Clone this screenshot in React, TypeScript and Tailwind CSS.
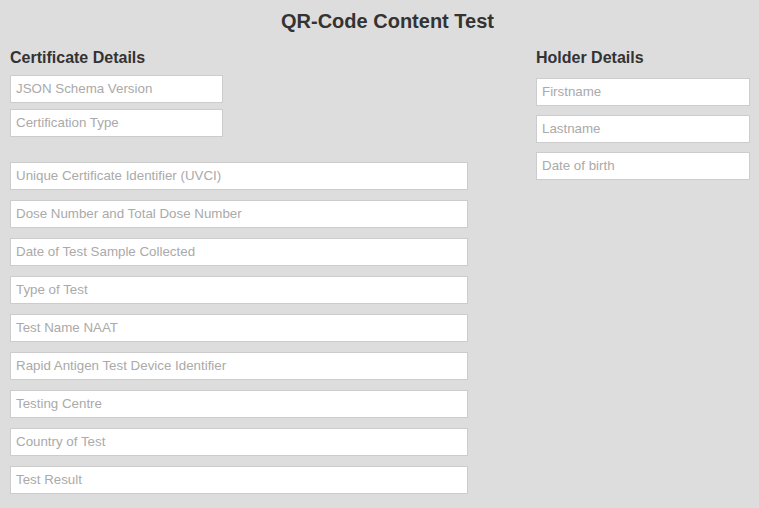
import React from "react";

const left1 = ["JSON Schema Version", "Certification Type"];
const left2 = [
  "Unique Certificate Identifier (UVCI)",
  "Dose Number and Total Dose Number",
  "Date of Test Sample Collected",
  "Type of Test",
  "Test Name NAAT",
  "Rapid Antigen Test Device Identifier",
  "Testing Centre",
  "Country of Test",
  "Test Result",
];
const right = ["Firstname", "Lastname", "Date of birth"];

function Field({ text, w }: { text: string; w: string }) {
  return (
    <div
      className={`${w} h-[28px] bg-white border border-[#cccccc] flex items-center pl-[5px] text-[13.33px] text-[#aaaaaa] leading-none`}
    >
      {text}
    </div>
  );
}

export default function App() {
  return (
    <div
      className="w-[759px] h-[508px] bg-[#dddddd] overflow-hidden text-[#333333]"
      style={{ fontFamily: '"Liberation Sans", Arial, sans-serif' }}
    >
      <div className="pl-[16px] pt-[9px] text-center text-[20px] font-bold leading-[24px]">
        QR-Code Content Test
      </div>
      <div className="flex pl-[10px] pt-[16px]">
        <div className="w-[458px]">
          <div className="text-[16px] font-bold leading-[18px] h-[22px]">Certificate Details</div>
          <div className="flex flex-col gap-[6px] mt-[4px]">
            {left1.map((t) => (
              <Field key={t} text={t} w="w-[213px]" />
            ))}
          </div>
          <div className="flex flex-col gap-[10px] mt-[25px]">
            {left2.map((t) => (
              <Field key={t} text={t} w="w-[458px]" />
            ))}
          </div>
        </div>
        <div className="ml-[68px] w-[214px]">
          <div className="text-[16px] font-bold leading-[18px] h-[22px]">Holder Details</div>
          <div className="flex flex-col gap-[9px] mt-[7px]">
            {right.map((t) => (
              <Field key={t} text={t} w="w-[214px]" />
            ))}
          </div>
        </div>
      </div>
    </div>
  );
}
